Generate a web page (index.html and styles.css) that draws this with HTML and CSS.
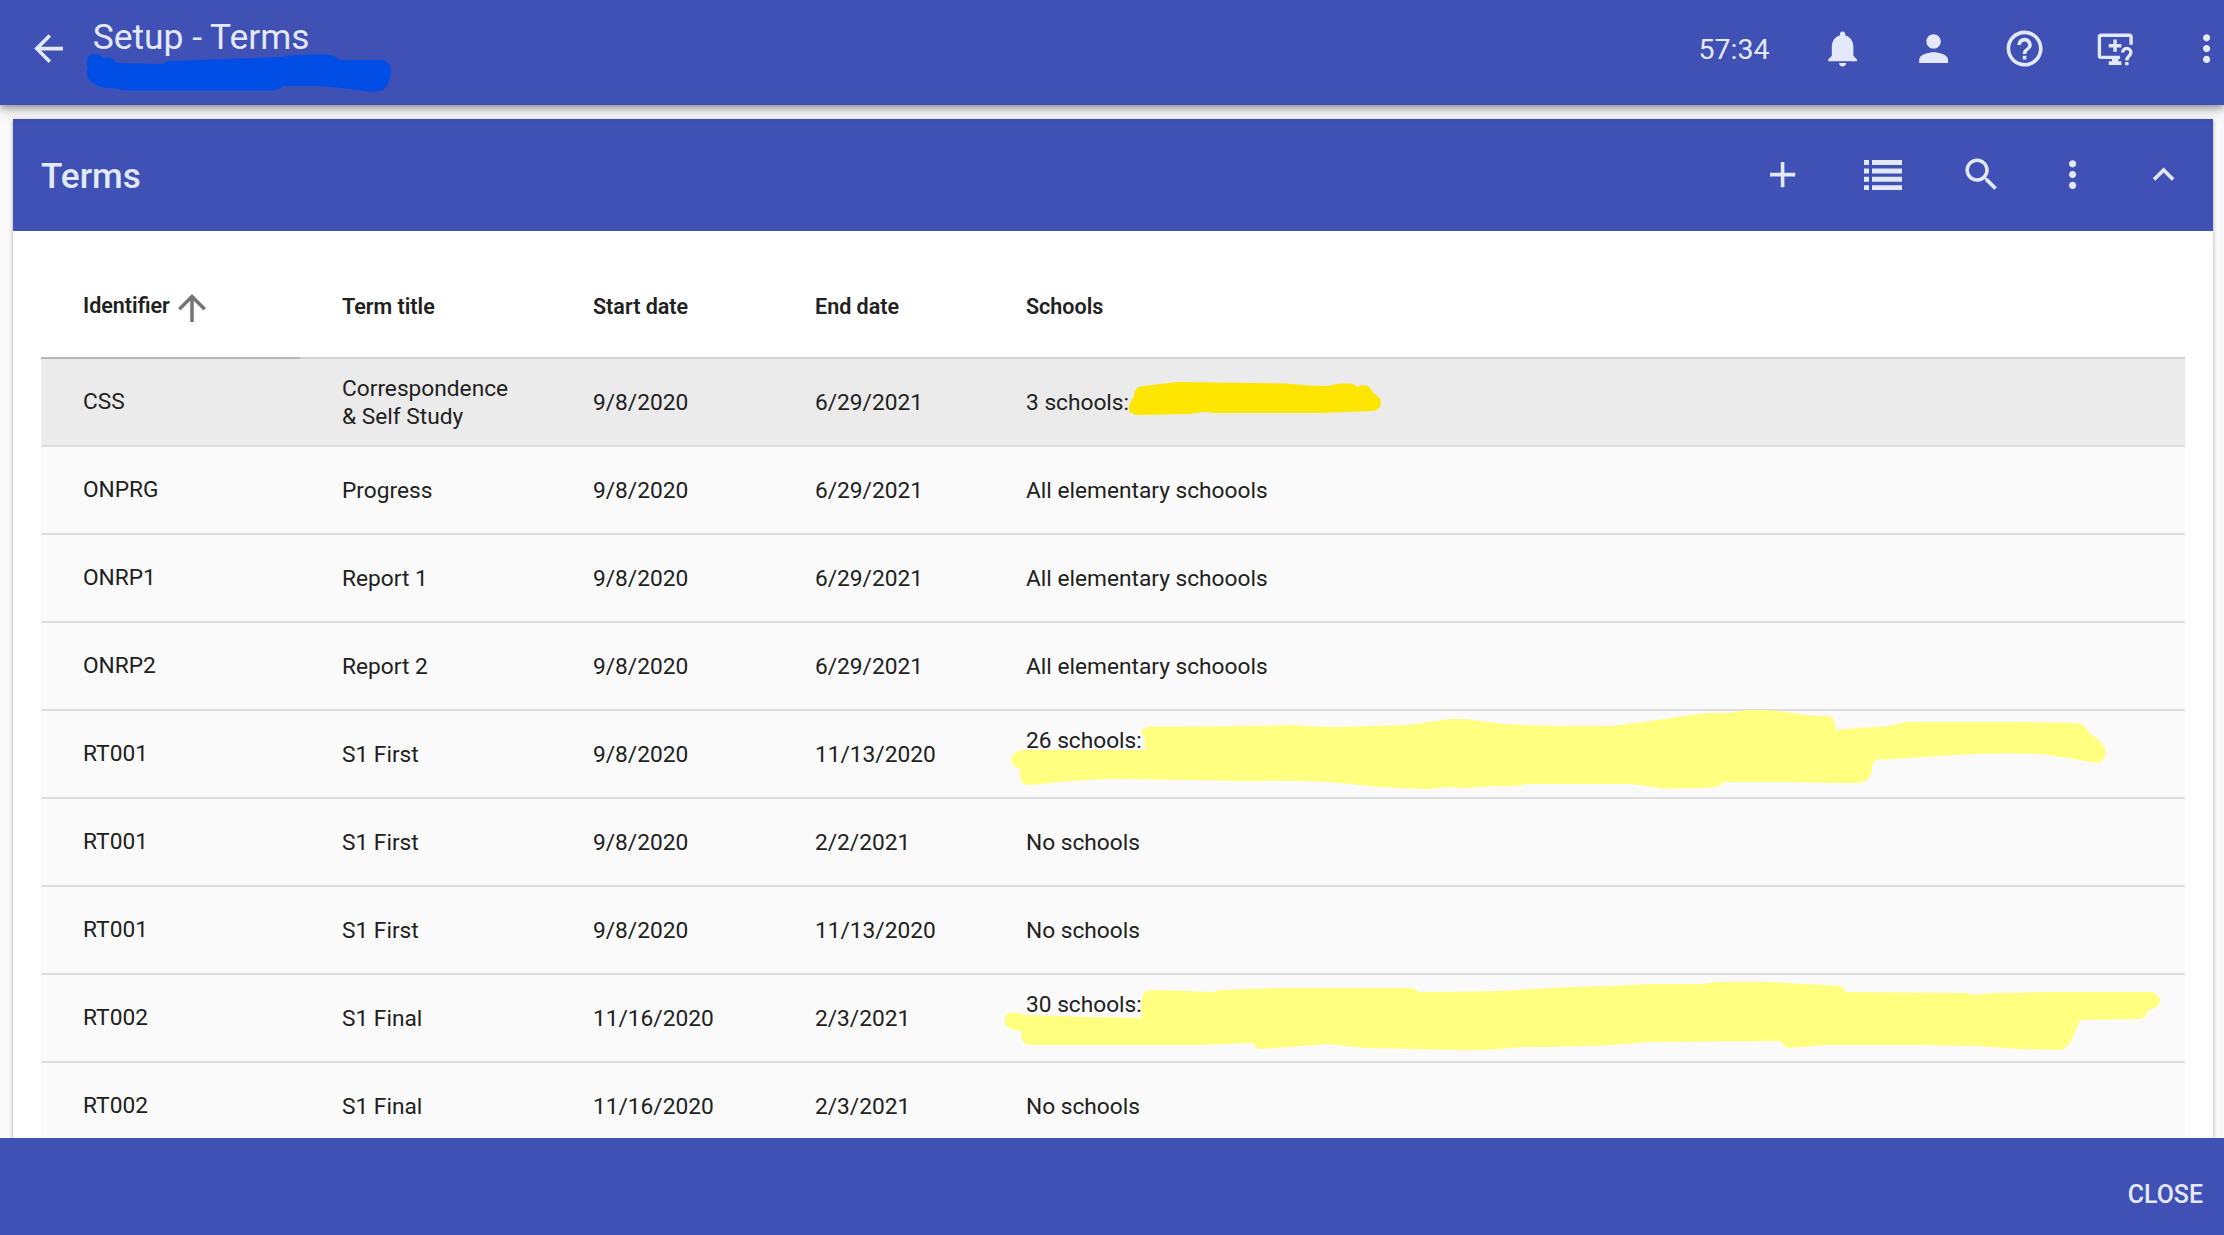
FILE: index.html
```html
<!DOCTYPE html>
<html lang="en">
<head>
<meta charset="utf-8">
<title>Setup - Terms</title>
<link rel="stylesheet" href="styles.css">
</head>
<body>
<header class="appbar">
  <svg class="icon back" viewBox="0 0 24 24"><path d="M20 11H7.83l5.59-5.59L12 4l-8 8 8 8 1.41-1.41L7.83 13H20v-2z"/></svg>
  <h1 class="appbar-title">Setup - Terms</h1>
  <span class="timer">57:34</span>
  <div class="appbar-actions">
    <svg class="icon" viewBox="0 0 24 24"><path d="M12 22c1.1 0 2-.9 2-2h-4c0 1.1.89 2 2 2zm6-6v-5c0-3.07-1.64-5.64-4.5-6.32V4c0-.83-.67-1.5-1.5-1.5s-1.500.67-1.500 1.500v.68C7.630 5.360 6 7.920 6 11v5l-2 2v1h16v-1l-2-2z"/></svg>
    <svg class="icon" viewBox="0 0 24 24"><path d="M12 12c2.210 0 4-1.790 4-4s-1.790-4-4-4-4 1.790-4 4 1.790 4 4 4zm0 2c-2.670 0-8 1.340-8 4v2h16v-2c0-2.660-5.330-4-8-4z"/></svg>
    <svg class="icon" viewBox="0 0 24 24"><path d="M11 18h2v-2h-2v2zm1-16C6.480 2 2 6.480 2 12s4.480 10 10 10 10-4.480 10-10S17.520 2 12 2zm0 18c-4.410 0-8-3.590-8-8s3.590-8 8-8 8 3.590 8 8-3.590 8-8 8zm0-14c-2.210 0-4 1.790-4 4h2c0-1.100.9-2 2-2s2 .9 2 2c0 2-3 1.750-3 5h2c0-2.250 3-2.500 3-5 0-2.210-1.790-4-4-4z"/></svg>
    <svg class="icon" viewBox="0 0 24 24"><path class="stroke" d="M20.600 9.900V5.600Q20.600 4.600 19.600 4.600H4Q3 4.600 3 5.600V15.900Q3 16.900 4 16.900H14.500M11.700 7V13.800M8.200 10.400H15.200M15.900 14.200C15.900 12.900 16.900 11.900 18.200 11.900S20.500 12.900 20.500 14.200C20.500 16 18.200 16.200 18.200 18.600"/><path d="M10 17.500h3.600v1.600h1.600v2H8.200v-2H10zM17.300 19.500h1.900v1.700h-1.900z"/></svg>
    <svg class="icon" viewBox="0 0 24 24"><path d="M12 8c1.100 0 2-.9 2-2s-.9-2-2-2-2 .9-2 2 .9 2 2 2zm0 2c-1.100 0-2 .9-2 2s.9 2 2 2 2-.9 2-2-.9-2-2-2zm0 6c-1.100 0-2 .9-2 2s.9 2 2 2 2-.9 2-2-.9-2-2-2z"/></svg>
  </div>
</header>

<main class="card">
  <div class="card-header">
    <h2 class="card-title">Terms</h2>
    <svg class="icon add" viewBox="0 0 24 24"><path d="M19 13h-6v6h-2v-6H5v-2h6V5h2v6h6v2z"/></svg>
    <svg class="icon list" viewBox="0 0 38 30"><path d="M0 0h5v5H0zM0 8.400h5v5H0zM0 16.800h5v5H0zM0 25.200h5v5H0zM8 0h30v5H8zM8 8.400h30v5H8zM8 16.800h30v5H8zM8 25.200h30v5H8z"/></svg>
    <svg class="icon search" viewBox="0 0 24 24"><path d="M15.500 14h-.79l-.28-.27C15.410 12.590 16 11.110 16 9.500 16 5.910 13.090 3 9.500 3S3 5.910 3 9.500 5.910 16 9.500 16c1.610 0 3.090-.59 4.230-1.570l.27.28v.79l5 4.990L20.490 19l-4.990-5zm-6 0C7.010 14 5 11.990 5 9.500S7.010 5 9.500 5 14 7.010 14 9.500 11.990 14 9.500 14z"/></svg>
    <svg class="icon more" viewBox="0 0 24 24"><path d="M12 8c1.100 0 2-.9 2-2s-.9-2-2-2-2 .9-2 2 .9 2 2 2zm0 2c-1.100 0-2 .9-2 2s.9 2 2 2 2-.9 2-2-.9-2-2-2zm0 6c-1.100 0-2 .9-2 2s.9 2 2 2 2-.9 2-2-.9-2-2-2z"/></svg>
    <svg class="icon collapse" viewBox="0 0 24 24"><path d="M12 8l-6 6 1.410 1.410L12 10.830l4.590 4.580L18 14z"/></svg>
  </div>
  <table class="terms">
    <colgroup><col class="c-id"><col class="c-title"><col class="c-start"><col class="c-end"><col></colgroup>
    <thead>
      <tr>
        <th class="sorted"><span class="sort">Identifier<svg class="sort-icon" viewBox="0 0 24 24"><path d="M4 12l1.410 1.410L11 7.830V20h2V7.830l5.580 5.590L20 12l-8-8-8 8z"/></svg></span></th>
        <th>Term title</th><th>Start date</th><th>End date</th><th>Schools</th>
      </tr>
    </thead>
    <tbody>
      <tr class="hover"><td>CSS</td><td>Correspondence<br>&amp; Self Study</td><td>9/8/2020</td><td>6/29/2021</td><td>3 schools:</td></tr>
      <tr><td>ONPRG</td><td>Progress</td><td>9/8/2020</td><td>6/29/2021</td><td>All elementary schoools</td></tr>
      <tr><td>ONRP1</td><td>Report 1</td><td>9/8/2020</td><td>6/29/2021</td><td>All elementary schoools</td></tr>
      <tr><td>ONRP2</td><td>Report 2</td><td>9/8/2020</td><td>6/29/2021</td><td>All elementary schoools</td></tr>
      <tr><td>RT001</td><td>S1 First</td><td>9/8/2020</td><td>11/13/2020</td><td>26 schools:<br>&nbsp;</td></tr>
      <tr><td>RT001</td><td>S1 First</td><td>9/8/2020</td><td>2/2/2021</td><td>No schools</td></tr>
      <tr><td>RT001</td><td>S1 First</td><td>9/8/2020</td><td>11/13/2020</td><td>No schools</td></tr>
      <tr><td>RT002</td><td>S1 Final</td><td>11/16/2020</td><td>2/3/2021</td><td>30 schools:<br>&nbsp;</td></tr>
      <tr><td>RT002</td><td>S1 Final</td><td>11/16/2020</td><td>2/3/2021</td><td>No schools</td></tr>
    </tbody>
  </table>
</main>

<footer class="footer"><span class="close">CLOSE</span></footer>

<!-- Marker strokes over private names -->
<svg class="marks" viewBox="0 0 2224 1235">
  <path fill="#004ee6" d="M87 62C87 55 92 54 96 54Q100 54 103 58Q112 56 117 63L163 64L168 61L282 57L288 55.500Q310 54 325 54.500Q335 55 341 60L382 60Q392 62 391 73Q389 86 383 90Q375 93 360 90.500Q340 87 318 86L282 86Q280 90 272 90.500L125 90.500Q119 89 113 88L104 88Q90 84 87 76Q86 71 88 68Q86 65 87 62Z"/>
  <path fill="#ffe600" d="M1129 407Q1130 401 1134 397Q1134 386 1144 386Q1160 384 1177 382L1285 383.500Q1310 386 1329 386Q1336 383 1343 383.500L1350 383.500Q1355 384 1357 387Q1360 385 1363 385Q1370 385 1373 393Q1381 397 1381 403Q1380 411 1372 411L1320 413H1213Q1205 411 1197 413L1189 414L1137 415Q1128 414 1129 407Z"/>
  <path fill="#ffff80" d="M1141 732Q1143 727 1150 726.500Q1220 727 1293 725Q1320 727 1340 727L1404 725Q1425 723 1449 719H1464Q1480 721 1503 724Q1540 726 1578 726L1612 726Q1645 722 1678 717Q1695 714 1710 713Q1727 713 1737 712L1745 710H1768Q1782 711 1799 714Q1812 716 1829 716Q1836 718 1835 730Q1860 727 1881 727Q1895 725 1905 722H2022L2078 723Q2085 724 2089 733Q2098 738 2102 744Q2106 749 2106 753Q2104 763 2096 763Q2070 758 2041 754Q2005 753 1971 754L1875 760Q1872 764 1872 770Q1870 782 1858 783Q1820 783 1788 782H1723Q1720 787 1715 787Q1700 789 1686 788Q1672 789 1659 788L1631 784H1527Q1515 787 1491 786L1468 788L1449 787L1429 789Q1405 789 1382 787Q1365 786 1351 784L1328 782Q1300 780 1250 781L1121 779Q1095 779 1070 781L1029 785Q1018 785 1020 769Q1012 767 1011 759Q1012 752 1023 750H1145L1145 740Z"/>
  <path fill="#ffff80" d="M1142 997Q1145 990 1152 990L1190 991Q1205 992 1215 992L1219 990L1279 988H1411Q1416 989 1419 992Q1458 992 1496 991L1571 987L1610 986L1649 984H1704Q1711 982 1720 982H1767L1841 986Q1844 989 1846 992L1968 993L1972 995L1994 993Q2020 993 2041 992H2152Q2159 994 2160 1001Q2158 1009 2148 1010Q2147 1019 2137 1019L2080 1020L2074 1035Q2068 1049 2060 1050L2017 1049L1978 1046Q1940 1045 1923 1045H1825L1788 1048Q1784 1047 1782 1043L1780 1041L1649 1042L1610 1045Q1565 1047 1524 1047L1484 1050H1457L1366 1048L1326 1044L1314 1045L1263 1049Q1256 1050 1253 1043L1196 1045H1030Q1019 1044 1022 1031Q1005 1030 1004.500 1021Q1005 1012 1014 1012Q1022 1015 1030 1015L1089 1017L1142 1018Q1140 1006 1142 997Z"/>
</svg>
</body>
</html>
```
FILE: styles.css
```css
* { box-sizing: border-box; }
body {
  margin: 0;
  height: 1235px;
  overflow: hidden;
  display: flex;
  flex-direction: column;
  background: #fafafa;
  color: #212121;
  font-family: Roboto, "Liberation Sans", sans-serif;
}
h1, h2 { margin: 0; }
.icon { display: block; flex: none; width: 43.2px; height: 43.2px; fill: #e4e8fb; }
.icon .stroke { fill: none; stroke: #e4e8fb; stroke-width: 1.9; }

.appbar {
  flex: none;
  height: 105px;
  display: flex;
  align-items: center;
  padding: 0 0 7px 26.500px;
  background: #3f51b5;
  color: #e4e8fb;
  position: relative;
  box-shadow: 0 3px 6px rgba(0,0,0,.3), 0 6px 15px rgba(0,0,0,.16);
}
.appbar-title { flex: 1; padding: 0 0 25px 23px; font-size: 35.400px; line-height: 40px; font-weight: 400; }
.timer { width: 123px; padding-top: 1px; font-size: 28.500px; line-height: 34px; }
.appbar-actions { display: flex; gap: 47.800px; margin-right: -4.600px; }

.card {
  flex: 1;
  min-height: 0;
  overflow: hidden;
  margin: 14px 11px 0 13px;
  background: #fff;
  box-shadow: 0 2px 4px rgba(0,0,0,.35);
}
.card-header {
  height: 112px;
  display: flex;
  align-items: center;
  padding: 0 27.400px 0 28px;
  background: #3f51b5;
  color: #e4e8fb;
}
.card-title { flex: 1; padding-top: 2px; font-size: 35.200px; line-height: 40px; font-weight: 500; }
.icon.list { width: 38px; height: 30px; margin: 0 58.700px 0 60px; }
.icon.more { margin: 0 47.800px; }

.terms {
  table-layout: fixed;
  border-collapse: separate;
  border-spacing: 0;
  width: 2144px;
  margin: 24px 28px 0;
  font-size: 22.700px;
  line-height: 28px;
}
.c-id { width: 259px; }
.c-title { width: 251px; }
.c-start { width: 222px; }
.c-end { width: 211px; }
.terms th, .terms td { padding: 2px 0 0 42px; text-align: left; white-space: nowrap; border-bottom: 2px solid #dedede; }
.terms th { height: 104px; font-size: 21.500px; font-weight: 600; border-bottom-color: #d0d0d0; }
.terms th.sorted { padding-top: 0; border-bottom-color: #b8b8b8; }
.terms td { height: 88px; background: #fafafa; }
.terms td:first-child { padding-top: 0; }
.terms .hover td { background: #ebebeb; }
.sort { display: flex; align-items: center; }
.sort-icon { width: 42px; height: 42px; margin: 3px 0 0 1px; fill: #757575; }

.footer {
  flex: none;
  height: 97px;
  display: flex;
  align-items: center;
  justify-content: flex-end;
  padding: 16px 21px 0 0;
  background: #3f51b5;
  color: #e4e8fb;
  position: relative;
}
.close { font-size: 24.900px; line-height: 28px; font-weight: 500; }

.marks { position: absolute; top: 0; left: 0; width: 2224px; height: 1235px; pointer-events: none; }
```
